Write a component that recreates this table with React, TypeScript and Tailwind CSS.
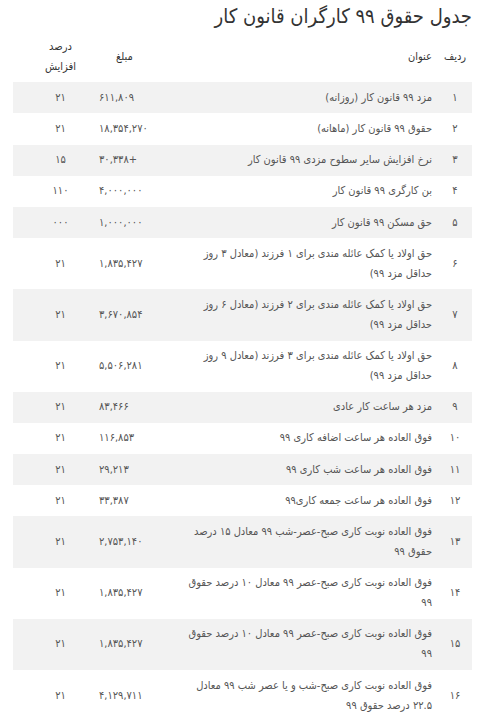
import React from "react";

type Row = { n: string; t: string[]; a: string; p: string };

const rows: Row[] = [
  { n: "۱", t: ["مزد ۹۹ قانون کار (روزانه)"], a: "۶۱۱,۸۰۹", p: "۲۱" },
  { n: "۲", t: ["حقوق ۹۹ قانون کار (ماهانه)"], a: "۱۸,۳۵۴,۲۷۰", p: "۲۱" },
  { n: "۳", t: ["نرخ افزایش سایر سطوح مزدی ۹۹ قانون کار"], a: "۳۰,۳۳۸+", p: "۱۵" },
  { n: "۴", t: ["بن کارگری ۹۹ قانون کار"], a: "۴,۰۰۰,۰۰۰", p: "۱۱۰" },
  { n: "۵", t: ["حق مسکن ۹۹ قانون کار"], a: "۱,۰۰۰,۰۰۰", p: "۰۰۰" },
  { n: "۶", t: ["حق اولاد یا کمک عائله مندی برای ۱ فرزند (معادل ۳ روز", "حداقل مزد ۹۹)"], a: "۱,۸۳۵,۴۲۷", p: "۲۱" },
  { n: "۷", t: ["حق اولاد یا کمک عائله مندی برای ۲ فرزند (معادل ۶ روز", "حداقل مزد ۹۹)"], a: "۳,۶۷۰,۸۵۴", p: "۲۱" },
  { n: "۸", t: ["حق اولاد یا کمک عائله مندی برای ۳ فرزند (معادل ۹ روز", "حداقل مزد ۹۹)"], a: "۵,۵۰۶,۲۸۱", p: "۲۱" },
  { n: "۹", t: ["مزد هر ساعت کار عادی"], a: "۸۳,۴۶۶", p: "۲۱" },
  { n: "۱۰", t: ["فوق العاده هر ساعت اضافه کاری ۹۹"], a: "۱۱۶,۸۵۳", p: "۲۱" },
  { n: "۱۱", t: ["فوق العاده هر ساعت شب کاری ۹۹"], a: "۲۹,۲۱۳", p: "۲۱" },
  { n: "۱۲", t: ["فوق العاده هر ساعت جمعه کاری۹۹"], a: "۳۳,۳۸۷", p: "۲۱" },
  { n: "۱۳", t: ["فوق العاده نوبت کاری صبح-عصر-شب ۹۹ معادل ۱۵ درصد", "حقوق ۹۹"], a: "۲,۷۵۳,۱۴۰", p: "۲۱" },
  { n: "۱۴", t: ["فوق العاده نوبت کاری صبح-عصر ۹۹ معادل ۱۰ درصد حقوق", "۹۹"], a: "۱,۸۳۵,۴۲۷", p: "۲۱" },
  { n: "۱۵", t: ["فوق العاده نوبت کاری صبح-عصر ۹۹ معادل ۱۰ درصد حقوق", "۹۹"], a: "۱,۸۳۵,۴۲۷", p: "۲۱" },
  { n: "۱۶", t: ["فوق العاده نوبت کاری صبح-شب و یا عصر شب ۹۹ معادل", "۲۲.۵ درصد حقوق ۹۹"], a: "۴,۱۲۹,۷۱۱", p: "۲۱" },
];

const grid = "grid grid-cols-[34px_266px_76px_71px] items-center";

export default function App() {
  return (
    <div
      dir="rtl"
      className="w-[485px] h-[727px] bg-white overflow-hidden px-[13px] text-[#555]"
      style={{ fontFamily: '"DejaVu Sans Condensed", "DejaVu Sans", sans-serif' }}
    >
      <h1 className="h-[31px] flex items-center text-[20px] font-light text-[#333] leading-none whitespace-nowrap">
        جدول حقوق ۹۹ کارگران قانون کار
      </h1>
      <div className={`${grid} text-[11px] leading-[20px] text-[#333] py-[5.6px]`}>
        <div className="text-center">ردیف</div>
        <div className="pr-[6px]">عنوان</div>
        <div className="text-left pl-[20px]">مبلغ</div>
        <div className="text-center">
          درصد
          <br />
          افزایش
        </div>
      </div>
      {rows.map((r, i) => (
        <div
          key={i}
          className={`${grid} text-[11px] leading-[20px] py-[5.6px] ${i % 2 === 0 ? "bg-[#f2f2f2]" : "bg-white"}`}
        >
          <div className="text-center">{r.n}</div>
          <div className="pr-[6px] whitespace-nowrap">
            {r.t.map((l, j) => (
              <div key={j}>{l}</div>
            ))}
          </div>
          <div className="text-left pl-[3px]" dir="ltr">
            {r.a}
          </div>
          <div className="text-center">{r.p}</div>
        </div>
      ))}
    </div>
  );
}
